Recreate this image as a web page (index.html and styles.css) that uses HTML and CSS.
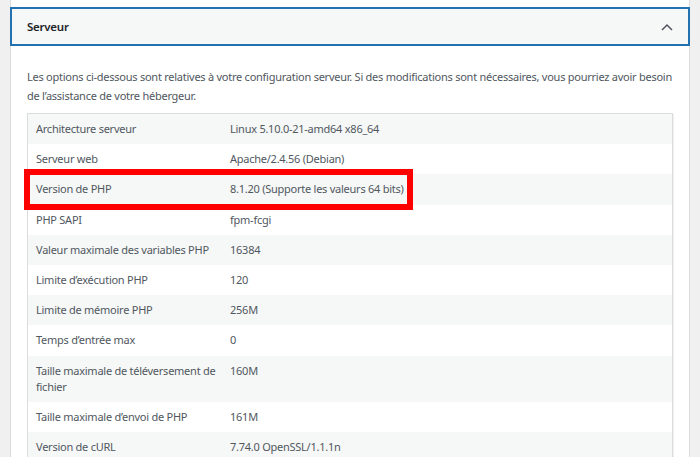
FILE: index.html
```html
<!DOCTYPE html>
<html lang="fr">
<head>
    <meta charset="UTF-8">
    <meta name="viewport" content="width=device-width, initial-scale=1.0">
    <title>Santé du site - Serveur</title>
    <link rel="stylesheet" href="styles.css">
</head>
<body>
    <div class="panel">
        <button type="button" class="panel-header" aria-expanded="true">
            <span class="panel-title">Serveur</span>
            <svg class="chevron" width="12" height="8" viewBox="0 0 12 8" aria-hidden="true">
                <polyline points="1,7 6,2 11,7" fill="none" stroke="#50575e" stroke-width="1.5"/>
            </svg>
        </button>
        <div class="panel-body">
            <p class="intro">Les options ci-dessous sont relatives à votre configuration serveur. Si des modifications sont nécessaires, vous pourriez avoir besoin de l’assistance de votre hébergeur.</p>
            <div class="table-wrap">
                <table class="info-table">
                    <tbody>
                        <tr><td>Architecture serveur</td><td>Linux 5.10.0-21-amd64 x86_64</td></tr>
                        <tr><td>Serveur web</td><td>Apache/2.4.56 (Debian)</td></tr>
                        <tr><td>Version de PHP</td><td>8.1.20 (Supporte les valeurs 64 bits)</td></tr>
                        <tr><td>PHP SAPI</td><td>fpm-fcgi</td></tr>
                        <tr><td>Valeur maximale des variables PHP</td><td>16384</td></tr>
                        <tr><td>Limite d’exécution PHP</td><td>120</td></tr>
                        <tr><td>Limite de mémoire PHP</td><td>256M</td></tr>
                        <tr><td>Temps d’entrée max</td><td>0</td></tr>
                        <tr><td>Taille maximale de téléversement de fichier</td><td>160M</td></tr>
                        <tr><td>Taille maximale d’envoi de PHP</td><td>161M</td></tr>
                        <tr><td>Version de cURL</td><td>7.74.0 OpenSSL/1.1.1n</td></tr>
                    </tbody>
                </table>
                <div class="highlight"></div>
            </div>
        </div>
    </div>
</body>
</html>
```

FILE: styles.css
```css
body {
    margin: 0;
    padding: 0 10px;
    background-color: #f0f0f1;
    font-family: "Noto Sans", "Open Sans", sans-serif;
    font-size: 11px;
    letter-spacing: -0.25px;
    color: #50575e;
    overflow: hidden;
}

.panel {
    background-color: #ffffff;
    border-left: 1px solid #dcdcde;
    border-right: 1px solid #dcdcde;
    padding-top: 7px;
    min-height: 460px;
}

.panel-header {
    display: flex;
    align-items: center;
    justify-content: space-between;
    width: calc(100% + 2px);
    height: 39px;
    margin: 0 -1px;
    padding: 0 15px 0 15px;
    border: 2px solid #2271b1;
    background-color: #f6f7f7;
    box-sizing: border-box;
    font-family: inherit;
    letter-spacing: inherit;
    cursor: pointer;
}

.panel-title {
    font-size: 11.5px;
    font-weight: 600;
    color: #1d2327;
}

.chevron {
    display: block;
}

.panel-body {
    padding: 0 16px;
}

.intro {
    margin: 21px 0 8px;
    line-height: 19px;
}

.table-wrap {
    position: relative;
}

.info-table {
    width: 100%;
    border-collapse: collapse;
    border: 1px solid #dcdcde;
    box-shadow: 1px 1px 1px rgba(0, 0, 0, 0.06);
}

.info-table td {
    padding: 7px 8px;
    line-height: 16.2px;
    vertical-align: top;
}

.info-table td:first-child {
    width: 183px;
    padding-right: 3px;
}

.info-table tr:nth-child(odd) {
    background-color: #f6f7f7;
}

.highlight {
    position: absolute;
    left: -3px;
    top: 56px;
    width: 389px;
    height: 41px;
    border: 6px solid #ff0000;
    box-sizing: border-box;
}
```
